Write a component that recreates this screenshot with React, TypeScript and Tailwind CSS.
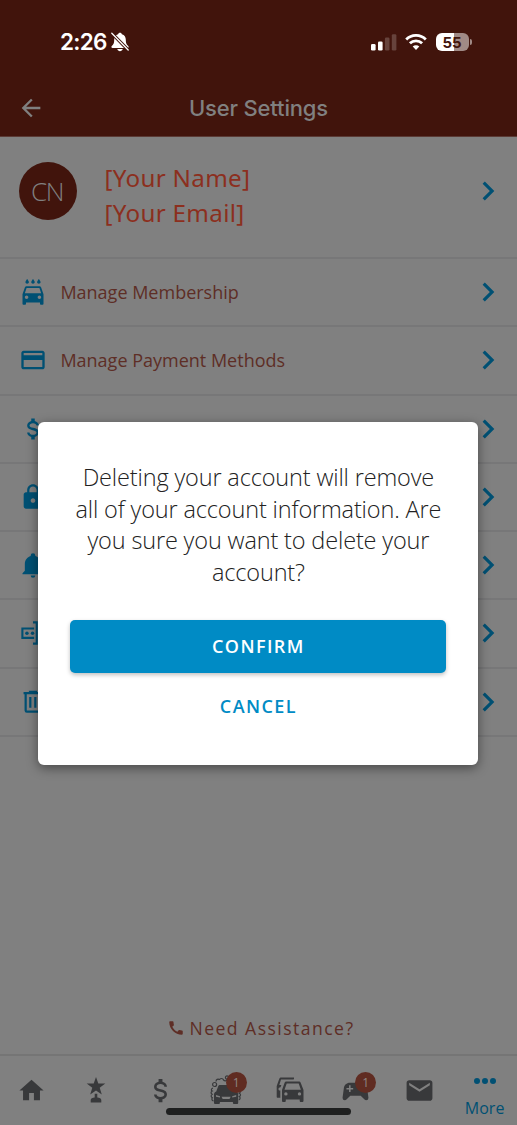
import React from 'react';
import {
  MdArrowBack,
  MdCall,
  MdChevronRight,
  MdCreditCard,
  MdHome,
  MdLocalCarWash,
  MdLock,
  MdMail,
} from 'react-icons/md';

interface RowProps {
  icon: React.ReactNode;
  label?: string;
}

function SettingsRow({ icon, label }: RowProps) {
  return (
    <div className="flex h-[68.25px] items-center border-b-2 border-[#777778] pl-[19.4px] pr-[10px]">
      <span className="flex size-7 items-center justify-center text-[#005073]">{icon}</span>
      <span className="ml-[13px] grow pt-px text-[18px] text-[#5e2e26]">{label}</span>
      <MdChevronRight className="size-[38px] text-[#005073]" />
    </div>
  );
}

function DollarIcon({ className }: { className: string }) {
  return (
    <svg viewBox="0 0 24 24" className={className} fill="currentColor">
      <path d="M7 15h2c0 1.080 1.370 2 3 2s3-.92 3-2c0-1.100-1.040-1.500-3.240-2.030C9.640 12.440 7 11.780 7 9c0-1.790 1.470-3.310 3.500-3.820V3h3v2.180C15.530 5.690 17 7.210 17 9h-2c0-1.080-1.370-2-3-2s-3 .92-3 2c0 1.100 1.040 1.500 3.240 2.030C14.360 11.560 17 12.220 17 15c0 1.790-1.470 3.310-3.500 3.820V21h-3v-2.180C8.470 18.310 7 16.790 7 15z" />
    </svg>
  );
}

function BellIcon() {
  return (
    <svg viewBox="0 0 24 24" className="size-7" fill="currentColor">
      <path d="M21 19v1H3v-1l2-2v-6c0-3.1 2.03-5.83 5-6.71V4a2 2 0 0 1 4 0v.29c2.97.88 5 3.61 5 6.71v6l2 2m-7 2a2 2 0 0 1-4 0" />
    </svg>
  );
}

function RenameIcon() {
  return (
    <svg viewBox="0 0 24 24" className="size-7" fill="none" stroke="currentColor" strokeWidth="1.8">
      <path d="M13 8.200H2.900v8H13M12 2.900h3.200v18.200H12M17.500 8.200h4v8h-4" />
      <circle cx="6.800" cy="12.200" r="1.500" fill="currentColor" stroke="none" />
      <circle cx="11.600" cy="12.200" r="1.500" fill="currentColor" stroke="none" />
    </svg>
  );
}

function TrashIcon() {
  return (
    <svg viewBox="0 0 24 24" className="size-7" fill="none" stroke="currentColor" strokeWidth="1.900">
      <path d="M3.900 4.400h16.200M8.500 3.400h7M5.700 5v14.200c0 .6.4 1.100 1 1.100h10.600c.6 0 1-.5 1-1.100V5M9.700 7.700v9.200M14 7.700v9.200" />
    </svg>
  );
}

function MutedBellIcon() {
  return (
    <svg viewBox="0 0 18 20" className="ml-[4.5px] h-5 w-[18px]">
      <path
        fill="#fff"
        d="M9 .8c-1 0-1.800.6-1.900 1.500C4.400 3.100 3.200 5.300 3.200 7.800c0 3.600-.7 4.600-2.200 6-1.200 1.100-.7 2.200.4 2.200h15.200c1.100 0 1.600-1.100.4-2.200-1.500-1.400-2.200-2.400-2.200-6 0-2.500-1.200-4.700-3.900-5.500C10.800 1.400 10 .8 9 .8zM6.300 17h5.400c-.3 1.300-1.400 2.200-2.700 2.200S6.600 18.300 6.300 17z"
      />
      <path d="M0 .500L18 18.800" stroke="#41140c" strokeWidth="3.300" />
      <path d="M.8 1.300L17.200 18" stroke="#fff" strokeWidth="1.300" strokeLinecap="round" />
    </svg>
  );
}

function StatusBar() {
  return (
    <div className="flex h-[84px] items-center justify-between pl-[60px] pr-[45.5px] font-['Inter'] text-white">
      <div className="flex items-center">
        <span className="text-[22.5px] font-semibold leading-none tracking-[-0.7px]">2:26</span>
        <MutedBellIcon />
      </div>
      <div className="flex items-center">
        <svg viewBox="0 0 26 17" className="mt-px h-[17px] w-[26px]" fill="#fff">
          <rect x="0" y="10" width="4.600" height="6.500" rx="1.300" />
          <rect x="7" y="7.500" width="4.600" height="9" rx="1.300" />
          <rect x="13.900" y="3.500" width="4.600" height="13" rx="1.300" opacity=".2" />
          <rect x="20.800" y=".3" width="4.600" height="16.200" rx="1.300" opacity=".2" />
        </svg>
        <svg viewBox="0 0 22 16" className="ml-2 h-4 w-[22px]" fill="none" stroke="#fff" strokeWidth="2.800">
          <path d="M1.200 5.400a14 14 0 0 1 19.600 0M4.900 9.300a8.700 8.700 0 0 1 12.200 0" />
          <path d="M11 16l-3.300-3.400a4.700 4.700 0 0 1 6.600 0z" fill="#fff" stroke="none" />
        </svg>
        <div className="ml-[9px] flex h-[18px] w-[33px] items-center justify-center rounded-[6px] bg-linear-to-r from-white from-[54%] to-[#a08a86] to-[54%] text-[15px] font-bold leading-none text-[#41140c]">
          55
        </div>
        <span className="ml-px h-[6px] w-[2px] rounded-r-full bg-[#a08a86]" />
      </div>
    </div>
  );
}

function Badge({ count }: { count: number }) {
  return (
    <span className="flex size-[21px] items-center justify-center rounded-full bg-[#602c22] text-[12px] text-[#8d8583]">
      {count}
    </span>
  );
}

function TrophyIcon() {
  return (
    <svg viewBox="0 0 20 26" className="h-[26px] w-5" fill="currentColor">
      <path d="M10 0l2.300 6.600h7l-5.600 4.200 2.100 6.700L10 13.400l-5.800 4.100 2.100-6.700L.7 6.600h7z" />
      <path d="M8.700 16.800h2.600v3.800c2.300.3 4 1.200 4 2.400V25.400H4.700V23c0-1.200 1.700-2.100 4-2.400z" />
    </svg>
  );
}

function FoamCarIcon() {
  return (
    <svg viewBox="0 0 32 30" className="h-[30px] w-8" fill="currentColor">
      <path
        fillRule="evenodd"
        d="M10 10h12.300c.8 0 1.400.5 1.700 1.200l2 5.300c1.500.7 2.200 1.700 2.200 3v8.200c0 .8-.5 1.300-1.300 1.300h-2.700c-.8 0-1.300-.5-1.300-1.300V27h-13v.7c0 .8-.5 1.300-1.300 1.300H5.300c-.8 0-1.300-.5-1.300-1.300v-8.200c0-1.300.7-2.300 2.200-3l2-5.300c.3-.7 1-1.200 1.800-1.200zM6 20v1.800l4 .7v-1.300zM26.200 20v1.800l-4 .7v-1.300zM11.500 21.700l1.200 2.300h6.800l1.200-2.300z"
      />
      <g fill="none" stroke="currentColor" strokeWidth="1.200">
        <circle cx="4.600" cy="9.500" r="2" />
        <circle cx="17" cy="2.500" r="1.600" />
        <path d="M6 6.500c0-2 2-3 3.500-1.800M9.500 5c.3-2 3.500-2 4 0 1.500 1.500 3 1 3.500-.5M3 13c-2 .5-2 2.500-.8 3-1.500 1-1.500 2.500 0 3.300-1.500 1-1.300 2.700.2 3.400-1 1.500-.5 3 1.200 3.300M29 15c1.700.5 1.700 2.500.3 3.200 1.700 1 1.500 2.700 0 3.300 1.300 1 1 3-.5 3.300" />
      </g>
    </svg>
  );
}

function CarsIcon() {
  return (
    <svg viewBox="0 0 28 26" className="h-[26px] w-7" fill="currentColor">
      <path
        fillRule="evenodd"
        d="M10.500 4.500h12.300c.9 0 1.600.5 1.900 1.300L27.500 13v10.700c0 .8-.5 1.300-1.300 1.300H25c-.8 0-1.300-.5-1.300-1.300V22.500H9.800v1.200c0 .8-.5 1.300-1.300 1.300H7.300C6.500 25 6 24.500 6 23.700V13l2.600-7.200c.3-.8 1-1.300 1.900-1.300zm.2 2L8.500 12.700h16.400l-2.200-6.200zM9.900 15.200a1.700 1.700 0 1 0 0 3.400 1.700 1.700 0 0 0 0-3.400zm13.600 0a1.700 1.700 0 1 0 0 3.400 1.700 1.700 0 0 0 0-3.400z"
      />
      <path d="M18 .500H5.200c-.9 0-1.600.4-1.900 1.300L.7 9v10.700c0 .7.400 1 1 1h2.600V13.500c-1.300 0-1.800-.5-1.800-1.500s.7-1.700 2-1.700L5.400 8H3.300l1.700-5.500h12c.7 0 1-.4 1-1z" />
    </svg>
  );
}

function ControllerIcon() {
  return (
    <svg viewBox="0 0 24 24" className="size-[31px]" fill="currentColor">
      <path d="M7.970 16L5 19c-.33.3-.77.5-1.250.5A1.750 1.750 0 0 1 2 17.750v-.25l1-7.380C3.210 7.810 5.140 6 7.500 6h9c2.360 0 4.290 1.810 4.500 4.120l1 7.380v.25a1.750 1.750 0 0 1-1.750 1.750c-.48 0-.92-.2-1.250-.5l-2.970-3H7.970M7 8v2H5v1.200h2v2h1.200v-2h2V10h-2V8H7z" />
    </svg>
  );
}

interface NavItemProps {
  children: React.ReactNode;
  badge?: number;
}

function NavItem({ children, badge }: NavItemProps) {
  return (
    <div className="relative flex h-[68px] flex-1 items-center justify-center">
      {children}
      {badge && (
        <div className="absolute left-1/2 top-4">
          <Badge count={badge} />
        </div>
      )}
    </div>
  );
}

export default function App() {
  return (
    <div className="relative flex h-[1125px] w-[517px] flex-col overflow-hidden bg-[#808080] font-['Open_Sans',sans-serif]">
      <header className="h-[137px] shrink-0 border-b border-[#5b3a35] bg-[#41140c]">
        <StatusBar />
        <div className="flex h-12 items-center pl-[17px]">
          <MdArrowBack className="size-7 text-[#808080]" />
          <h1 className="grow pr-[45px] text-center font-['Inter'] text-[22px] font-medium tracking-[-0.17px] text-[#808080]">
            User Settings
          </h1>
        </div>
      </header>

      <section className="flex h-[122px] shrink-0 border-b-2 border-[#777778] pl-[19px] pr-[10px] pt-[25px]">
        <div className="flex size-[58px] items-center justify-center rounded-full bg-[#41140c] pr-[2px] text-[26px] font-light tracking-[-1.5px] text-[#808080]">
          CN
        </div>
        <div className="-mt-[2px] ml-[27.5px] grow font-['Noto_Sans'] text-[24.2px] leading-[35px] tracking-[0.3px] text-[#8c2f1e]">
          <p>[Your Name]</p>
          <p>[Your Email]</p>
        </div>
        <MdChevronRight className="mt-[10px] size-[38px] text-[#005073]" />
      </section>

      <SettingsRow icon={<MdLocalCarWash className="size-7" />} label="Manage Membership" />
      <SettingsRow icon={<MdCreditCard className="size-7" />} label="Manage Payment Methods" />
      <SettingsRow icon={<DollarIcon className="size-7" />} />
      <SettingsRow icon={<MdLock className="size-7" />} />
      <SettingsRow icon={<BellIcon />} />
      <SettingsRow icon={<RenameIcon />} />
      <SettingsRow icon={<TrashIcon />} />

      <div className="mt-auto flex items-center justify-center pb-[13px] pl-[4px] text-[#5e2e26]">
        <MdCall className="size-[18px]" />
        <span className="ml-[5px] text-[17.6px] tracking-[1.45px]">Need Assistance?</span>
      </div>

      <nav className="-ml-px flex h-[71px] w-[518px] shrink-0 border-t-2 border-[#757575] text-[#38393b]">
        <NavItem>
          <MdHome className="size-[29px]" />
        </NavItem>
        <NavItem>
          <TrophyIcon />
        </NavItem>
        <NavItem>
          <DollarIcon className="size-[31px]" />
        </NavItem>
        <NavItem badge={1}>
          <FoamCarIcon />
        </NavItem>
        <NavItem>
          <CarsIcon />
        </NavItem>
        <NavItem badge={1}>
          <ControllerIcon />
        </NavItem>
        <NavItem>
          <MdMail className="size-[31px]" />
        </NavItem>
        <div className="flex flex-1 flex-col items-center pt-[22px] text-[#005073]">
          <div className="flex gap-[2px]">
            <span className="size-[6px] rounded-full bg-[#005073]" />
            <span className="size-[6px] rounded-full bg-[#005073]" />
            <span className="size-[6px] rounded-full bg-[#005073]" />
          </div>
          <span className="mt-[12px] text-[16px] leading-[24px]">More</span>
        </div>
      </nav>
      <div className="absolute bottom-[10px] left-[166px] h-[7px] w-[185px] rounded-full bg-[#1f2020]" />

      {/* confirm dialog */}
      <div
        role="dialog"
        className="absolute left-[38.4px] top-[422px] flex h-[343px] w-[440px] flex-col items-center rounded-[6px] bg-white px-8 pt-[40px] shadow-[0_3px_12px_rgba(0,0,0,0.45)]"
      >
        <p className="whitespace-nowrap text-center text-[23.5px] font-light leading-[31.5px] tracking-[-0.15px] text-[#222]">
          Deleting your account will remove
          <br />
          all of your account information. Are
          <br />
          you sure you want to delete your
          <br />
          account?
        </p>
        <button className="mt-[31.5px] h-[53.5px] w-full rounded-[5px] bg-[#008bc5] pt-px text-[18px] font-semibold tracking-[1.4px] text-white shadow-[0_2px_4px_rgba(0,0,0,0.25)]">
          CONFIRM
        </button>
        <button className="mt-[20px] text-[18px] font-semibold tracking-[1.4px] text-[#008bc5]">CANCEL</button>
      </div>
    </div>
  );
}
